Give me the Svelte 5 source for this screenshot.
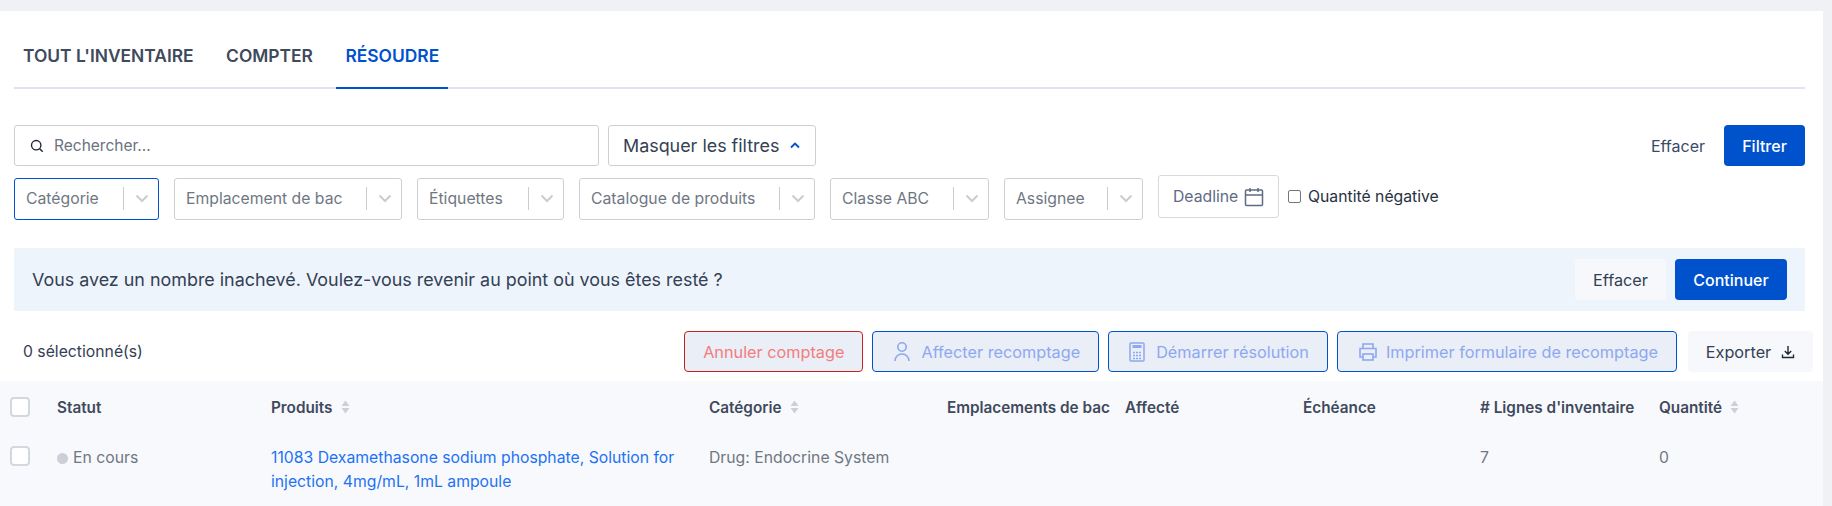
<script>
  const tabs = [
    { label: "TOUT L'INVENTAIRE" },
    { label: 'COMPTER' },
    { label: 'RÉSOUDRE', active: true }
  ];
  const filters = [
    { label: 'Catégorie', width: 145, focus: true },
    { label: 'Emplacement de bac', width: 228 },
    { label: 'Étiquettes', width: 147 },
    { label: 'Catalogue de produits', width: 236 },
    { label: 'Classe ABC', width: 159 },
    { label: 'Assignee', width: 139 }
  ];
  const columns = [
    { label: 'Statut' },
    { label: 'Produits', sort: true },
    { label: 'Catégorie', sort: true },
    { label: 'Emplacements de bac' },
    { label: 'Affecté' },
    { label: 'Échéance' },
    { label: "# Lignes d'inventaire" },
    { label: 'Quantité', sort: true }
  ];
</script>

<div class="page">
  <main>
    <nav class="tabs">
      {#each tabs as tab}
        <span class="tab" class:active={tab.active}>{tab.label}</span>
      {/each}
    </nav>

    <section class="filters">
      <div class="filter-top">
        <div class="search">
          <svg width="14" height="14" viewBox="0 0 14 14" fill="none" stroke="#1f2937" stroke-width="1.4"><circle cx="6.2" cy="6.2" r="4.7" /><path d="M9.7 9.7l3 3" /></svg>
          <span>Rechercher...</span>
        </div>
        <div class="toggle">
          Masquer les filtres
          <svg width="10" height="7" viewBox="0 0 10 7" fill="none" stroke="#0052cc" stroke-width="1.8"><path d="M1 5.5l4-4 4 4" /></svg>
        </div>
        <div class="filter-actions">
          <span class="link">Effacer</span>
          <button class="btn primary filtrer">Filtrer</button>
        </div>
      </div>
      <div class="filter-bottom">
        {#each filters as f}
          <div class="select" class:focus={f.focus} style="width: {f.width}px">
            <span class="select-label">{f.label}</span>
            <span class="sep"></span>
            <svg width="14" height="9" viewBox="0 0 14 9" fill="none" stroke="#cccccc" stroke-width="2"><path d="M1.5 1.5L7 7l5.5-5.5" /></svg>
          </div>
        {/each}
        <div class="deadline">
          Deadline
          <svg width="20" height="20" viewBox="0 0 20 20" fill="none" stroke="#5e6b83" stroke-width="1.5"><rect x="1.5" y="3" width="17" height="15.5" rx="1" /><path d="M1.5 8h17M6 1v4M14 1v4" /></svg>
        </div>
        <label class="negative"><span class="check small"></span>Quantité négative</label>
      </div>
    </section>

    <section class="banner">
      <p>Vous avez un nombre inachevé. Voulez-vous revenir au point où vous êtes resté ?</p>
      <button class="btn light clear">Effacer</button>
      <button class="btn primary continue">Continuer</button>
    </section>

    <section class="actions">
      <span class="count">0 sélectionné(s)</span>
      <button class="btn outline danger">Annuler comptage</button>
      <button class="btn outline">
        <svg width="18" height="22" viewBox="0 0 18 22" fill="none" stroke="#8ea8f0" stroke-width="1.6"><circle cx="9" cy="6" r="4.2" /><path d="M2 20c0-4 3-7 7-7s7 3 7 7" /></svg>
        Affecter recomptage
      </button>
      <button class="btn outline calc">
        <svg width="16" height="20" viewBox="0 0 16 20" fill="none" stroke="#8ea8f0" stroke-width="1.5"><rect x="1" y="1" width="14" height="18" rx="1" /><path d="M3.5 4.5h9" stroke-width="3" /><path d="M4 10.5h2M7 10.5h2M10 10.5h2M4 13.5h2M7 13.5h2M10 13.5h2M4 16.5h2M7 16.5h2M10 16.5h2" /></svg>
        Démarrer résolution
      </button>
      <button class="btn outline print">
        <svg width="20" height="20" viewBox="0 0 20 20" fill="none" stroke="#8ea8f0" stroke-width="1.6"><path d="M5 6V2h10v4M5 15H2V6.5h16V15h-3" /><rect x="5" y="12" width="10" height="6" /></svg>
        Imprimer formulaire de recomptage
      </button>
      <button class="btn light export">
        Exporter
        <svg width="14" height="14" viewBox="0 0 14 14" fill="none" stroke="#1f2937" stroke-width="1.4"><path d="M7 1v8M3.8 6L7 9.2 10.2 6M1.5 9.5v3h11v-3" /></svg>
      </button>
    </section>

    <section class="table">
      <div class="grid head">
        <span class="check"></span>
        {#each columns as col}
          <span class="th">
            {col.label}
            {#if col.sort}
              <svg width="9" height="14" viewBox="0 0 9 14" fill="#ccd0d6"><path d="M4.5 0.5L8.5 6H0.5zM4.5 13.5L0.5 8h8z" /></svg>
            {/if}
          </span>
        {/each}
      </div>
      <div class="grid row">
        <span class="check"></span>
        <span class="status"><i></i>En cours</span>
        <a href="#top" class="product">11083 Dexamethasone sodium phosphate, Solution for injection, 4mg/mL, 1mL ampoule</a>
        <span>Drug: Endocrine System</span>
        <span></span>
        <span></span>
        <span></span>
        <span>7</span>
        <span>0</span>
      </div>
    </section>
  </main>
</div>

<style>
  :global(body) {
    margin: 0;
    background: #eff1f5;
    font-family: Inter, "Liberation Sans", sans-serif;
    overflow: hidden;
  }

  .page {
    height: 506px;
    padding: 11px 9px 0 0;
    box-sizing: border-box;
    overflow: hidden;
  }

  main {
    background: #fff;
    height: 495px;
  }

  .tabs {
    display: flex;
    margin: 0 18px 0 14px;
    height: 76px;
    border-bottom: 2px solid #dfe3f0;
  }

  .tab {
    padding: 0 9px;
    margin-right: 14.5px;
    height: 78px;
    line-height: 90px;
    font-size: 17.4px;
    font-weight: 600;
    color: #3f4a5c;
    box-sizing: border-box;
    white-space: nowrap;
  }

  .tab.active {
    color: #0052cc;
    border-bottom: 2px solid #0052cc;
  }

  .filters {
    margin: 36px 18px 0 14px;
  }

  .filter-top {
    display: flex;
    gap: 9px;
    align-items: stretch;
    height: 41px;
  }

  .search {
    width: 585px;
    display: flex;
    align-items: center;
    gap: 10px;
    padding-left: 15px;
    box-sizing: border-box;
    border: 1px solid #ccd0d6;
    border-radius: 3px;
    font-size: 15.5px;
    color: #6b7280;
  }

  .toggle {
    width: 208px;
    display: flex;
    align-items: center;
    gap: 11px;
    padding-left: 14px;
    box-sizing: border-box;
    border: 1px solid #ccd0d6;
    border-radius: 3px;
    font-size: 17.9px;
    white-space: nowrap;
    color: #344054;
  }

  .filter-actions {
    margin-left: auto;
    display: flex;
    align-items: center;
    gap: 19px;
  }

  .link {
    font-size: 16px;
    color: #3a4a6b;
  }

  .btn {
    height: 41px;
    border: 0;
    border-radius: 4px;
    font-family: inherit;
    font-size: 16.25px;
    display: inline-flex;
    align-items: center;
    justify-content: center;
    box-sizing: border-box;
    white-space: nowrap;
  }

  .btn.primary {
    background: #0052cc;
    color: #fff;
    font-weight: 500;
    font-size: 16px;
  }

  .filtrer {
    width: 81px;
  }

  .btn.light {
    background: #f7f8fb;
    color: #344054;
  }

  .filter-bottom {
    display: flex;
    align-items: center;
    gap: 15px;
    margin-top: 11px;
    height: 43px;
  }

  .select {
    height: 42px;
    display: flex;
    align-items: center;
    padding: 0 9px 0 11px;
    box-sizing: border-box;
    border: 1px solid #ccd0d6;
    border-radius: 3px;
    font-size: 15.75px;
    color: #6f7782;
  }

  .select.focus {
    border-color: #0052cc;
  }

  .select-label {
    flex: 1;
    white-space: nowrap;
  }

  .sep {
    width: 1px;
    height: 23px;
    background: #ccc;
    margin-right: 11px;
  }

  .deadline {
    width: 121px;
    height: 43px;
    display: flex;
    align-items: center;
    gap: 6px;
    padding-left: 14px;
    box-sizing: border-box;
    border: 1px solid #d6d9de;
    border-radius: 3px;
    font-size: 15.75px;
    color: #5e6b83;
    margin-top: -4px;
  }

  .negative {
    display: flex;
    align-items: center;
    gap: 7px;
    margin: -4px 0 0 -6px;
    font-size: 15.75px;
    color: #27303f;
  }

  .check {
    display: block;
    width: 20px;
    height: 20px;
    box-sizing: border-box;
    border: 2px solid #d3d7de;
    border-radius: 4px;
    background: #fff;
  }

  .check.small {
    width: 13px;
    height: 13px;
    border: 1.5px solid #767676;
    border-radius: 2px;
  }

  .banner {
    margin: 28px 18px 0 14px;
    height: 63px;
    background: #eef4fc;
    display: flex;
    align-items: center;
    padding: 0 18px;
    gap: 9px;
    box-sizing: border-box;
  }

  .banner p {
    margin: 0 auto 0 0;
    font-size: 17.9px;
    color: #344054;
  }

  .clear {
    width: 91px;
  }

  .continue {
    width: 112px;
  }

  .actions {
    display: flex;
    align-items: center;
    gap: 9px;
    margin: 20px 10px 0 23px;
    height: 41px;
  }

  .count {
    margin-right: auto;
    font-size: 15.75px;
    color: #344054;
  }

  .btn.outline {
    gap: 10px;
    padding: 0 18px 0 20px;
    background: #e9eef7;
    border: 1px solid #0052cc;
    color: #8ea8f0;
  }

  .btn.outline.calc {
    gap: 11px;
  }

  .btn.outline.print {
    gap: 8px;
  }

  .btn.outline.danger {
    padding: 0 18px;
    border-color: #c9211e;
    color: #f47c7c;
  }

  .export {
    width: 125px;
    gap: 10px;
    margin-left: 2px;
  }

  .table {
    margin-top: 9px;
    background: #f8f9fc;
    height: 125px;
  }

  .grid {
    display: grid;
    grid-template-columns: 47px 214px 438px 238px 178px 178px 177px 179px 1fr;
    padding-left: 10px;
    font-size: 15.75px;
    color: #6f7782;
  }

  .head {
    height: 52px;
    align-items: center;
  }

  .th {
    display: flex;
    align-items: center;
    gap: 8px;
    font-weight: 600;
    font-size: 15.3px;
    color: #3f4a5c;
    white-space: nowrap;
  }

  .row {
    padding-top: 13px;
    line-height: 24px;
    align-items: start;
  }

  .status {
    display: flex;
    align-items: center;
    gap: 5px;
  }

  .status i {
    display: block;
    width: 11px;
    height: 11px;
    border-radius: 50%;
    background: #ccd0d6;
  }

  .product {
    color: #1d72f3;
    text-decoration: none;
    padding-right: 20px;
  }
</style>
